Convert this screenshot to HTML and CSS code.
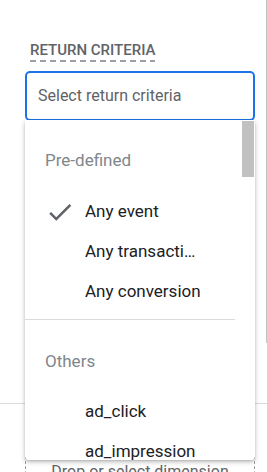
FILE: index.html
```html
<!DOCTYPE html>
<html lang="en">
<head>
    <meta charset="UTF-8">
    <meta name="viewport" content="width=device-width, initial-scale=1.0">
    <title>Return criteria</title>
    <link rel="stylesheet" href="styles.css">
</head>
<body>
    <div class="page">
        <div class="top">
            <div class="fields">
                <div class="field-label">RETURN CRITERIA</div>
                <div class="select-box">Select return criteria</div>
            </div>
            <div class="rail"></div>
        </div>

        <div class="dropzone">Drop or select dimension</div>

        <!-- Dropdown abierto sobre el contenido -->
        <div class="menu">
            <div class="menu-scroll"></div>
            <div class="group">
                <div class="group-title">Pre-defined</div>
                <div class="option selected">
                    <svg class="check" viewBox="0 0 24 24" width="30" height="30">
                        <path d="M9 16.17L4.83 12l-1.42 1.41L9 19 21 7l-1.41-1.41z" fill="currentColor"/>
                    </svg>
                    Any event
                </div>
                <div class="option">Any transacti…</div>
                <div class="option">Any conversion</div>
            </div>
            <div class="group">
                <div class="group-title">Others</div>
                <div class="option">ad_click</div>
                <div class="option">ad_impression</div>
            </div>
        </div>
    </div>
</body>
</html>
```

FILE: styles.css
```css
* {
    margin: 0;
    padding: 0;
    box-sizing: border-box;
}

body {
    font-family: Roboto, 'Liberation Sans', sans-serif;
    background: white;
    color: #202124;
    overflow: hidden;
}

.page {
    position: relative;
    width: 267px;
    height: 472px;
    overflow: hidden;
}

.top {
    display: flex;
    height: 404px;
    border-bottom: 1px solid #dadce0;
}

.fields {
    flex: 1;
    padding: 40px 0 0 25px;
}

.rail {
    width: 1px;
    height: 343px;
    background: #c4c4c4;
}

.field-label {
    display: inline-block;
    margin-left: 5px;
    padding-bottom: 4px;
    font-size: 15px;
    font-weight: 500;
    line-height: 16px;
    color: #5f6368;
    background: repeating-linear-gradient(to right, #9aa0a6 0 6px, transparent 6px 10px) left bottom / 100% 2px no-repeat;
}

.select-box {
    width: 230px;
    height: 50px;
    margin-top: 9px;
    padding: 0 11px;
    border: 2px solid #1a73e8;
    border-radius: 5px;
    font-size: 16px;
    line-height: 46px;
    color: #5f6368;
}

.dropzone {
    width: 230px;
    height: 80px;
    margin: 16px 0 0 25px;
    padding-top: 41px;
    border: 1px dashed #9aa0a6;
    text-align: center;
    font-size: 16px;
    line-height: 19px;
    color: #5f6368;
}

.menu {
    position: absolute;
    left: 25px;
    top: 120px;
    width: 230px;
    height: 340px;
    overflow: hidden;
    background: white;
    border-radius: 0 0 4px 4px;
    box-shadow: 0 2px 5px rgba(0,0,0,0.25), 0 1px 2px rgba(0,0,0,0.1);
}

.menu-scroll {
    position: absolute;
    right: 1px;
    top: 1px;
    width: 12px;
    height: 56px;
    background: #c1c1c1;
}

.group {
    padding-bottom: 8px;
}

.group + .group {
    padding-top: 1px;
}

.menu-scroll + .group {
    margin-right: 20px;
    border-bottom: 1px solid #dadce0;
}

.group-title {
    padding: 20px 0 11px 20px;
    font-size: 17px;
    line-height: 40px;
    color: #80868b;
}

.group + .group .group-title {
    padding-top: 20px;
    padding-bottom: 10px;
}

.option {
    position: relative;
    padding-left: 60px;
    font-size: 17px;
    line-height: 40px;
    white-space: nowrap;
}

.check {
    position: absolute;
    left: 20px;
    top: 6px;
    color: #5f6368;
}
```
